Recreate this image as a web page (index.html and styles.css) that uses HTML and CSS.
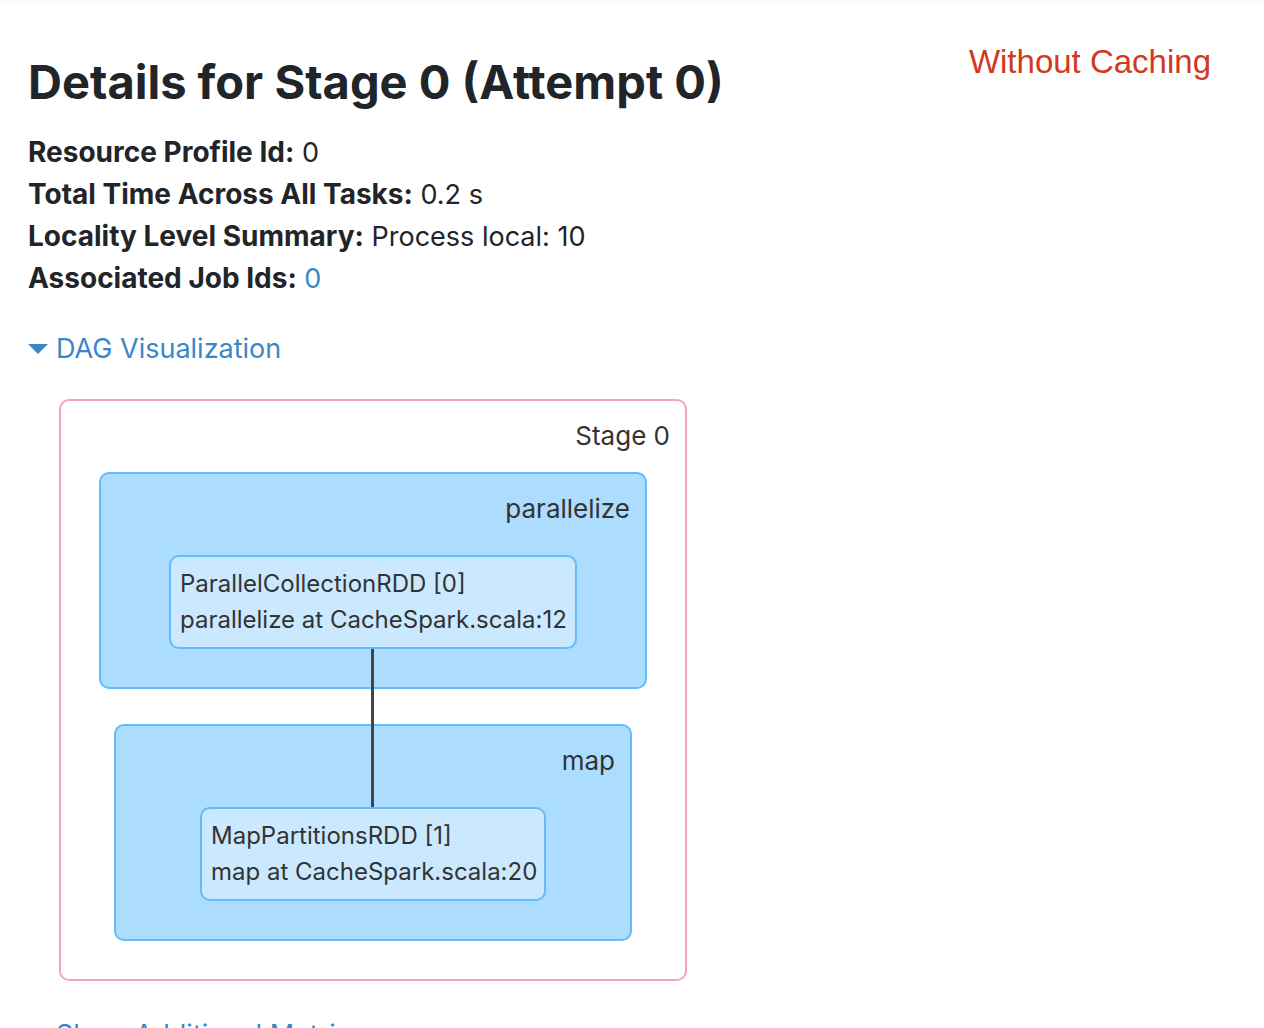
FILE: index.html
```
<!DOCTYPE html>
<html lang="en">
<head>
<meta charset="utf-8">
<title>Details for Stage 0 (Attempt 0)</title>
<link rel="stylesheet" href="styles.css">
</head>
<body>
<main class="page">
  <header class="page-header">
    <h1 class="title">Details for Stage 0 (Attempt 0)</h1>
    <p class="note">Without Caching</p>
  </header>
  <ul class="summary">
    <li><strong>Resource Profile Id:</strong> 0</li>
    <li><strong>Total Time Across All Tasks:</strong> 0.2 s</li>
    <li><strong>Locality Level Summary:</strong> Process local: 10</li>
    <li><strong>Associated Job Ids:</strong> <a href="#job-0">0</a></li>
  </ul>
  <a class="toggle" href="#dag">
    <svg class="arrow" viewBox="0 0 20 10" aria-hidden="true"><path d="M0 0h20L10 10z"/></svg>
    DAG Visualization
  </a>
  <section class="stage" id="dag">
    <h2 class="label">Stage 0</h2>
    <div class="cluster">
      <h3 class="label">parallelize</h3>
      <div class="node node-source">ParallelCollectionRDD [0]<br>parallelize at CacheSpark.scala:12</div>
    </div>
    <div class="cluster cluster-narrow">
      <h3 class="label">map</h3>
      <div class="node node-narrow">MapPartitionsRDD [1]<br>map at CacheSpark.scala:20</div>
    </div>
  </section>
  <a class="metrics" href="#metrics">Show Additional Metrics</a>
</main>
</body>
</html>
```
FILE: styles.css
```
* { box-sizing: border-box; }
html { scrollbar-width: none; }
body {
  margin: 0;
  background: #fff linear-gradient(#fafafa, #fff) top / 100% 10px no-repeat;
  color: #212529;
  font: 27px/42px Inter, "Liberation Sans", sans-serif;
}
a { color: #3a87c8; text-decoration: none; }
.page { padding: 40px 28px 0; }
.page-header {
  display: flex;
  justify-content: space-between;
  align-items: flex-start;
  padding-right: 25px;
}
.title { margin: 12px 0 19px; font-size: 47px; line-height: 60px; font-weight: 700; }
.note {
  margin: 0;
  color: #d13a20;
  font: 33px/44px "Liberation Sans", Arial, sans-serif;
}
.summary { margin: 0 0 29px; padding: 0; list-style: none; }
.summary li { height: 42px; }
.summary strong { font-size: 28px; font-weight: 700; }
.toggle { display: flex; align-items: center; gap: 8px; width: fit-content; }
.arrow { width: 20px; height: 10px; fill: currentColor; }

/* DAG: a stage holds clusters, a cluster holds one RDD node */
.stage {
  display: flex;
  flex-direction: column;
  align-items: center;
  width: 628px;
  margin: 29px 0 0 31px;
  padding: 15px 0 38px;
  border: 2px solid #f4a6b4;
  border-radius: 10px;
  color: #333;
}
.label {
  align-self: stretch;
  margin: 0;
  padding-right: 15px;
  font-size: 26px;
  font-weight: 400;
  line-height: 40px;
  text-align: right;
}
.cluster {
  display: flex;
  flex-direction: column;
  align-items: center;
  width: 548px;
  margin-top: 16px;
  padding: 15px 0 38px;
  border: 2px solid #64bbfb;
  border-radius: 10px;
  background: #acdcfe;
}
.cluster-narrow { width: 518px; margin-top: 35px; }
.node {
  width: 408px;
  margin-top: 26px;
  padding: 9px;
  border: 2px solid #64bbfb;
  border-radius: 10px;
  background: #cae9ff;
  font-size: 24px;
  line-height: 36px;
  white-space: nowrap;
}
.node-narrow { width: 346px; }
.node-source { position: relative; }
.node-source::after {
  content: "";
  position: absolute;
  top: calc(100% + 2px);
  left: 50%;
  width: 3px;
  height: 158px;
  margin-left: -2px;
  background: #444;
}
.metrics { display: block; width: fit-content; margin: 33px 0 0 28px; }
```
